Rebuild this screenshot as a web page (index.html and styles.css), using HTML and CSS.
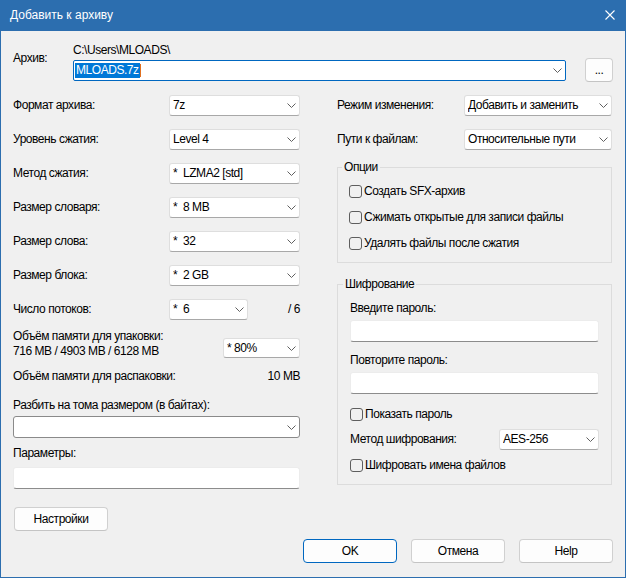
FILE: index.html
```html
<!DOCTYPE html>
<html lang="ru">
<head>
<meta charset="utf-8">
<title>Добавить к архиву</title>
<link rel="stylesheet" href="styles.css">
</head>
<body>
<div class="dialog">
  <div class="titlebar">
    <span class="title">Добавить к архиву</span>
    <svg class="close" width="10" height="10" viewBox="0 0 10 10"><path d="M0.5 0.5 L9.5 9.5 M9.5 0.5 L0.5 9.5" stroke="#fff" stroke-width="1.1" fill="none"/></svg>
  </div>
  <div class="body">
    <div class="archive-row">
      <div class="archive-label">Архив:</div>
      <div class="archive-field">
        <div class="path">C:\Users\MLOADS\</div>
        <div class="combo focus"><span class="val"><span class="sel">MLOADS.7z</span><span class="caret"></span></span><svg class="chev" width="9" height="5" viewBox="0 0 9 5"><path d="M0.5 0.5 L4.5 4.5 L8.5 0.5"/></svg></div>
      </div>
      <button class="btn dots">...</button>
    </div>

    <div class="columns">
      <div class="left">
        <div class="row"><span class="lbl">Формат архива:</span><div class="combo w131"><span class="val">7z</span><svg class="chev" width="9" height="5" viewBox="0 0 9 5"><path d="M0.5 0.5 L4.5 4.5 L8.5 0.5"/></svg></div></div>
        <div class="row gap"><span class="lbl">Уровень сжатия:</span><div class="combo w131"><span class="val">Level 4</span><svg class="chev" width="9" height="5" viewBox="0 0 9 5"><path d="M0.5 0.5 L4.5 4.5 L8.5 0.5"/></svg></div></div>
        <div class="row gap"><span class="lbl">Метод сжатия:</span><div class="combo w131"><span class="val">*  LZMA2 [std]</span><svg class="chev" width="9" height="5" viewBox="0 0 9 5"><path d="M0.5 0.5 L4.5 4.5 L8.5 0.5"/></svg></div></div>
        <div class="row gap"><span class="lbl">Размер словаря:</span><div class="combo w131"><span class="val">*  8 MB</span><svg class="chev" width="9" height="5" viewBox="0 0 9 5"><path d="M0.5 0.5 L4.5 4.5 L8.5 0.5"/></svg></div></div>
        <div class="row gap"><span class="lbl">Размер слова:</span><div class="combo w131"><span class="val">*  32</span><svg class="chev" width="9" height="5" viewBox="0 0 9 5"><path d="M0.5 0.5 L4.5 4.5 L8.5 0.5"/></svg></div></div>
        <div class="row gap"><span class="lbl">Размер блока:</span><div class="combo w131"><span class="val">*  2 GB</span><svg class="chev" width="9" height="5" viewBox="0 0 9 5"><path d="M0.5 0.5 L4.5 4.5 L8.5 0.5"/></svg></div></div>
        <div class="row gap"><span class="lbl">Число потоков:</span><div class="combo w79"><span class="val">*  6</span><svg class="chev" width="9" height="5" viewBox="0 0 9 5"><path d="M0.5 0.5 L4.5 4.5 L8.5 0.5"/></svg></div><span class="of">/ 6</span></div>
        <div class="mem-row">
          <div class="mem-text">Объём памяти для упаковки:<br>716 MB / 4903 MB / 6128 MB</div>
          <div class="combo w77 mem-combo"><span class="val">* 80%</span><svg class="chev" width="9" height="5" viewBox="0 0 9 5"><path d="M0.5 0.5 L4.5 4.5 L8.5 0.5"/></svg></div>
        </div>
        <div class="unpack-row"><span>Объём памяти для распаковки:</span><span>10 MB</span></div>
        <div class="split-label">Разбить на тома размером (в байтах):</div>
        <div class="combo edit split-combo"><span class="val"></span><svg class="chev" width="9" height="5" viewBox="0 0 9 5"><path d="M0.5 0.5 L4.5 4.5 L8.5 0.5"/></svg></div>
        <div class="params-label">Параметры:</div>
        <div class="textbox params-box"></div>
      </div>

      <div class="right">
        <div class="row"><span class="lbl-r">Режим изменения:</span><div class="combo w148"><span class="val">Добавить и заменить</span><svg class="chev" width="9" height="5" viewBox="0 0 9 5"><path d="M0.5 0.5 L4.5 4.5 L8.5 0.5"/></svg></div></div>
        <div class="row gap"><span class="lbl-r">Пути к файлам:</span><div class="combo w148"><span class="val">Относительные пути</span><svg class="chev" width="9" height="5" viewBox="0 0 9 5"><path d="M0.5 0.5 L4.5 4.5 L8.5 0.5"/></svg></div></div>

        <fieldset class="group options">
          <legend>Опции</legend>
          <label class="check"><span class="box"></span>Создать SFX-архив</label>
          <label class="check cgap"><span class="box"></span>Сжимать открытые для записи файлы</label>
          <label class="check cgap"><span class="box"></span>Удалять файлы после сжатия</label>
        </fieldset>

        <fieldset class="group crypt">
          <legend>Шифрование</legend>
          <div class="plabel">Введите пароль:</div>
          <div class="textbox pbox"></div>
          <div class="plabel second">Повторите пароль:</div>
          <div class="textbox pbox"></div>
          <label class="check show"><span class="box"></span>Показать пароль</label>
          <div class="method-row"><span>Метод шифрования:</span><div class="combo w100"><span class="val">AES-256</span><svg class="chev" width="9" height="5" viewBox="0 0 9 5"><path d="M0.5 0.5 L4.5 4.5 L8.5 0.5"/></svg></div></div>
          <label class="check names"><span class="box"></span>Шифровать имена файлов</label>
        </fieldset>
      </div>
    </div>

    <div class="footer">
      <button class="btn settings">Настройки</button>
      <div class="actions">
        <button class="btn ok">OK</button>
        <button class="btn">Отмена</button>
        <button class="btn">Help</button>
      </div>
    </div>
  </div>
</div>
</body>
</html>
```

FILE: styles.css
```css
html, body {
  margin: 0;
  padding: 0;
  background: #f0f0f0;
}

.dialog {
  width: 626px;
  height: 578px;
  box-sizing: border-box;
  border: 1px solid #2c6eaf;
  border-top: 0;
  background: #f0f0f0;
  font-family: "Liberation Sans", Arial, sans-serif;
  font-size: 12px;
  line-height: 15px;
  letter-spacing: -0.45px;
  color: #000;
}

.titlebar {
  height: 31px;
  background: #2c6eaf;
  display: flex;
  align-items: center;
  justify-content: space-between;
  padding: 0 10px 0 9px;
  color: #fff;
}

.title {
  font-size: 12px;
  letter-spacing: 0;
  padding-bottom: 1px;
}

.close {
  display: block;
  margin-bottom: 1px;
}

.body {
  padding: 12px 12px 0 12px;
}

/* archive row */
.archive-row {
  display: flex;
  align-items: flex-end;
}

.archive-label {
  width: 60px;
  align-self: flex-start;
  padding-top: 8px;
}

.archive-field {
  flex: 1;
  margin-right: 19px;
}

.path {
  height: 15px;
  margin-bottom: 2px;
}

.btn {
  font-family: inherit;
  font-size: 12px;
  letter-spacing: inherit;
  color: #000;
  background: #fdfdfd;
  border: 1px solid #d0d0d0;
  border-bottom-color: #c4c4c4;
  border-radius: 4px;
  padding: 0;
  height: 24px;
  width: 94px;
  box-sizing: border-box;
}

.btn.dots {
  width: 28px;
  margin-bottom: -1px;
  line-height: 14px;
}

/* combobox */
.combo {
  display: flex;
  align-items: center;
  height: 21px;
  box-sizing: border-box;
  background: #fff;
  border: 1px solid #dedede;
  border-bottom-color: #a8a8a8;
  border-radius: 3px;
  padding: 0 3px 0 3px;
  white-space: pre;
}

.combo .val {
  flex: 1;
  display: flex;
  align-items: center;
  overflow: hidden;
}

.chev {
  display: block;
  flex: none;
  fill: none;
  stroke: #606060;
  stroke-width: 1;
}

.combo.focus {
  border: 1px solid #0067c0;
  border-radius: 2px;
  padding-left: 1px;
}

.sel {
  background: #0078d7;
  color: #fff;
  padding: 0 1px;
}

.caret {
  display: inline-block;
  width: 1px;
  height: 13px;
  background: #e07020;
}

.combo.edit {
  border: 1px solid #8a8a8a;
  border-radius: 3px;
}

.w131 { width: 131px; }
.w79 { width: 79px; }
.w77 { width: 77px; }
.w148 { width: 148px; }
.w100 { width: 100px; }

/* columns */
.columns {
  display: grid;
  grid-template-columns: 287px 275px;
  column-gap: 37px;
  margin-top: 14px;
}

.row {
  display: flex;
  align-items: center;
  height: 21px;
}

.row.gap {
  margin-top: 13px;
}

.lbl {
  width: 156px;
}

.lbl-r {
  width: 127px;
}

.of {
  margin-left: auto;
}

.mem-row {
  display: flex;
  justify-content: space-between;
  align-items: flex-start;
  margin-top: 9px;
}

.mem-combo {
  margin-top: 9px;
  height: 20px;
}

.unpack-row {
  display: flex;
  justify-content: space-between;
  margin-top: 10px;
}

.split-label {
  margin-top: 14px;
}

.split-combo {
  margin-top: 3px;
  height: 22px;
}

.params-label {
  margin-top: 8px;
}

.textbox {
  height: 22px;
  box-sizing: border-box;
  background: #fff;
  border: 1px solid #ececec;
  border-bottom-color: #8c8c8c;
  border-radius: 3px;
}

.params-box {
  margin-top: 6px;
}

/* groups */
.group {
  margin: 0;
  border: 1px solid #dcdcdc;
  padding: 9px 12px 11px 11px;
  min-width: 0;
}

.group legend {
  padding: 0 2px;
  margin-left: -7px;
  line-height: 15px;
}

.options {
  margin-top: 10px;
}

.crypt {
  margin-top: 14px;
  padding-left: 12px;
}

.check {
  display: flex;
  align-items: center;
  height: 15px;
}

.check.cgap {
  margin-top: 11px;
}

.box {
  width: 13px;
  height: 13px;
  box-sizing: border-box;
  border: 1px solid #5e5e5e;
  border-radius: 3px;
  margin-right: 2px;
  flex: none;
}

.plabel.second {
  margin-top: 11px;
}

.pbox {
  margin-top: 4px;
}

.check.show {
  margin-top: 13px;
}

.method-row {
  display: flex;
  justify-content: space-between;
  align-items: center;
  margin-top: 7px;
}

.check.names {
  margin-top: 8px;
}

/* footer */
.footer {
  margin-top: 18px;
}

.btn.settings {
  margin-left: 1px;
  display: block;
}

.actions {
  display: flex;
  justify-content: flex-end;
  gap: 14px;
  margin-top: 8px;
}

.btn.ok {
  border-color: #0067c0;
}
```
